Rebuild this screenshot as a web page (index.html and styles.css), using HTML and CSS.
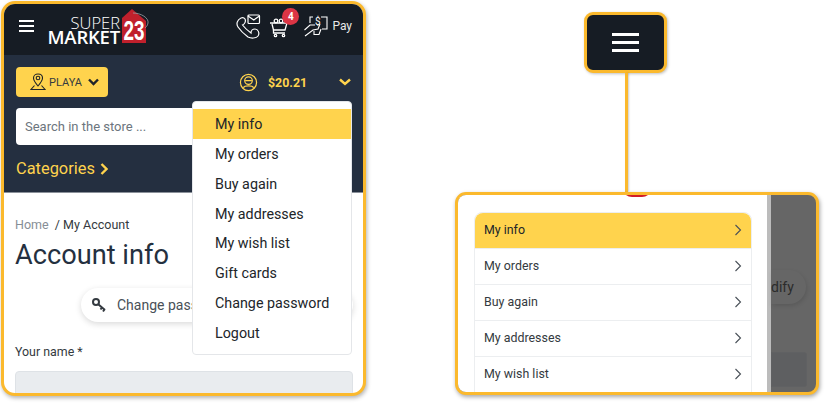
FILE: index.html
```html
<!DOCTYPE html>
<html lang="en">
<head>
  <meta charset="UTF-8">
  <title>Super Market 23 - Account menu</title>
  <link rel="stylesheet" href="styles.css">
</head>
<body>
  <div class="page">

    <!-- Left: phone with the dropdown open -->
    <div class="phone">
      <div class="topbar">
        <div class="burger"><span></span><span></span><span></span></div>
        <div class="logo">
          <div class="logo-words">
            <div class="logo-super">SUPER</div>
            <div class="logo-market">MARKET</div>
          </div>
          <svg class="logo-tag" width="32" height="36" viewBox="0 0 32 36">
            <path d="M1 10 L11 1 L25 13 L25 35 L1 35 Z" fill="#c0202c"/>
            <path d="M12 5 C20 5 28 10 27 15 C26.500 18 25 19 24 20" fill="none" stroke="#9aa0a6" stroke-width="0.800"/>
            <text x="13" y="32" text-anchor="middle" class="logo-num" textLength="21" lengthAdjust="spacingAndGlyphs">23</text>
          </svg>
        </div>
        <div class="top-icons">
          <svg class="icon-call" width="25" height="25" viewBox="0 0 25 25" fill="none" stroke="#fff" stroke-width="1.200">
            <path d="M5 4 C1 6 0 10 2 13 C4 16 8 20 12 23 C15 24.500 20 24.500 22 22 C24 19 22 15 19 15 C16.500 15 15 17 15 19 C11 16 8 13 6.500 11 C9 10 10 7 9 5 C8 3.500 6 3.500 5 4 Z"/>
            <rect x="12" y="1" width="11.500" height="8.500" rx="1"/>
            <path d="M12 2 L17.750 6 L23.500 2"/>
          </svg>
          <div class="cart">
            <svg width="21" height="22" viewBox="0 0 21 22" fill="none" stroke="#fff" stroke-width="1.300">
              <path d="M1 7 H18 L16 14 H4.500 L3 8"/>
              <path d="M4.500 14 V17 H16"/>
              <circle cx="6.500" cy="19.500" r="1.200"/>
              <circle cx="14.500" cy="19.500" r="1.200"/>
              <circle cx="7" cy="5" r="1.800"/>
              <circle cx="12" cy="5" r="1.800"/>
            </svg>
            <span class="badge">4</span>
          </div>
          <svg class="icon-pay" width="24" height="22" viewBox="0 0 24 22" fill="none" stroke="#fff" stroke-width="1.100">
            <path d="M6 8 V2 H9 M17 2 H23 V14 H18"/>
            <path d="M0.500 15 L6 10 L11 10 M1 21 L9 15 L14 14 L16 9 M10 16 V19.500 H15 L17 14"/>
            <text x="11" y="10" class="pay-sign">$</text>
          </svg>
          <span class="pay">Pay</span>
        </div>
      </div>

      <div class="nav">
        <div class="nav-row">
          <button class="place">
            <svg width="16" height="18" viewBox="0 0 16 18" fill="none" stroke="#212529" stroke-width="1.100">
              <path d="M8 13 C5 9.500 3.500 7.500 3.500 5 C3.500 2.500 5.500 1 8 1 C10.500 1 12.500 2.500 12.500 5 C12.500 7.500 11 9.500 8 13 Z"/>
              <circle cx="8" cy="5" r="1.800"/>
              <path d="M4.500 12.500 L1 16.500 H15 L11.500 12.500"/>
            </svg>
            <span>PLAYA</span>
            <svg class="place-arrow" width="11" height="8" viewBox="0 0 11 8" fill="none" stroke="#212529" stroke-width="2.400">
              <path d="M1 1.500 L5.500 6 L10 1.500"/>
            </svg>
          </button>
          <div class="wallet">
            <svg width="19" height="19" viewBox="0 0 20 20" fill="none" stroke="#ffd34d" stroke-width="1.300">
              <circle cx="10" cy="10" r="8.500"/>
              <circle cx="10" cy="8" r="4"/>
              <path d="M6.500 8 H13.500"/>
              <path d="M4.500 15.500 C6 13 14 13 15.500 15.500"/>
            </svg>
            <span class="amount">$20.21</span>
          </div>
          <svg class="wallet-arrow" width="12" height="8" viewBox="0 0 12 8" fill="none" stroke="#ffd34d" stroke-width="2.400">
            <path d="M1 1.500 L6 6 L11 1.500"/>
          </svg>
        </div>
        <div class="search">Search in the store ...</div>
        <div class="categories">
          Categories
          <svg width="8" height="12" viewBox="0 0 8 12" fill="none" stroke="#ffd34d" stroke-width="2.400">
            <path d="M1.500 1 L6.500 6 L1.500 11"/>
          </svg>
        </div>
      </div>

      <div class="content">
        <div class="crumbs"><span class="crumb-home">Home</span> &nbsp;/ My Account</div>
        <h1>Account info</h1>
        <div class="pill-row">
          <div class="pill">
            <svg width="16" height="16" viewBox="0 0 16 16" fill="none" stroke="#343a40" stroke-width="2">
              <circle cx="5" cy="5" r="3"/>
              <path d="M7.500 7.500 L14 13 M11 10.500 L9.500 12.500 M13.500 12.500 L12 14.500"/>
            </svg>
            <span>Change password</span>
          </div>
        </div>
        <div class="field-label">Your name *</div>
        <div class="field"></div>
      </div>

      <ul class="dropdown">
        <li class="active">My info</li>
        <li>My orders</li>
        <li>Buy again</li>
        <li>My addresses</li>
        <li>My wish list</li>
        <li>Gift cards</li>
        <li>Change password</li>
        <li>Logout</li>
      </ul>
    </div>

    <!-- Right: burger callout and the menu it opens -->
    <div class="side">
      <div class="callout">
        <div class="burger big"><span></span><span></span><span></span></div>
      </div>
      <div class="connector"></div>
      <div class="drawer-shot">
        <span class="red-bit"></span>
        <div class="drawer">
          <ul class="menu">
            <li class="active">My info <svg class="chev" width="8" height="12" viewBox="0 0 8 12"><path d="M1.500 1 L6.500 6 L1.500 11"/></svg></li>
            <li>My orders <svg class="chev" width="8" height="12" viewBox="0 0 8 12"><path d="M1.500 1 L6.500 6 L1.500 11"/></svg></li>
            <li>Buy again <svg class="chev" width="8" height="12" viewBox="0 0 8 12"><path d="M1.500 1 L6.500 6 L1.500 11"/></svg></li>
            <li>My addresses <svg class="chev" width="8" height="12" viewBox="0 0 8 12"><path d="M1.500 1 L6.500 6 L1.500 11"/></svg></li>
            <li>My wish list <svg class="chev" width="8" height="12" viewBox="0 0 8 12"><path d="M1.500 1 L6.500 6 L1.500 11"/></svg></li>
          </ul>
        </div>
        <div class="shade">
          <div class="shade-pill">dify</div>
          <div class="shade-field"></div>
        </div>
      </div>
    </div>

  </div>
</body>
</html>
```

FILE: styles.css
```css
* {
  box-sizing: border-box;
}

body {
  margin: 0;
  background: #fff;
  font-family: Roboto, "Liberation Sans", sans-serif;
  color: #212529;
}

ul {
  margin: 0;
  padding: 0;
  list-style: none;
}

.page {
  display: flex;
  align-items: flex-start;
  width: 827px;
  height: 403px;
  padding: 1px 0 0 1px;
  overflow: hidden;
}

/* Left phone */

.phone {
  position: relative;
  flex: none;
  width: 365px;
  height: 395px;
  border: 3px solid #fbb92d;
  border-radius: 14px;
  background: #fff;
  box-shadow: 1px 2px 4px rgba(0, 0, 0, 0.3);
  overflow: hidden;
}

.topbar {
  display: flex;
  align-items: center;
  height: 51px;
  padding: 0 11px 7px 15px;
  background: #161c24;
}

.burger {
  display: flex;
  flex-direction: column;
  gap: 3px;
  width: 15px;
}

.burger span {
  height: 2px;
  background: #fff;
}

.logo {
  display: flex;
  align-items: flex-end;
  margin-left: 12px;
  height: 36px;
}

.logo-words {
  width: 74px;
  text-align: right;
  color: #fff;
  font-family: "Open Sans", sans-serif;
  line-height: 14px;
}

.logo-super {
  font-size: 16.500px;
  font-weight: 300;
}

.logo-market {
  margin-left: -4px;
  font-size: 18.500px;
  font-weight: 600;
  letter-spacing: -0.200px;
}

.logo-tag {
  margin-left: 1px;
  overflow: visible;
}

.logo-num {
  font-family: "Liberation Sans", sans-serif;
  font-size: 28px;
  font-weight: 700;
  fill: #fff;
}

.top-icons {
  display: flex;
  align-items: center;
  margin-left: auto;
}

.icon-call {
  margin-right: 8px;
}

.cart {
  position: relative;
  width: 21px;
  height: 22px;
  margin-top: 2px;
  margin-right: 14px;
}

.badge {
  position: absolute;
  top: -8px;
  left: 13px;
  width: 17px;
  height: 17px;
  border-radius: 50%;
  background: #dc3545;
  color: #fff;
  font-size: 10px;
  font-weight: 700;
  line-height: 17px;
  text-align: center;
}

.icon-pay {
  margin-right: 4px;
}

.pay-sign {
  font-family: Roboto, sans-serif;
  font-size: 10px;
  fill: #fff;
  stroke: none;
}

.pay {
  color: #e8e8e8;
  font-size: 12px;
}

.nav {
  height: 138px;
  padding: 12px 12px 0;
  background: #242f40;
  border-bottom: 1px solid #8b919a;
}

.nav-row {
  display: flex;
  align-items: center;
}

.place {
  display: flex;
  align-items: center;
  width: 92px;
  height: 30px;
  padding: 0 0 0 14px;
  border: none;
  border-radius: 4px;
  background: #ffd34d;
  color: #343a40;
  font-family: inherit;
  font-size: 11px;
}

.place span {
  margin-left: 3px;
}

.place-arrow {
  margin-left: 6px;
}

.wallet {
  display: flex;
  align-items: center;
  gap: 10px;
  margin-left: 131px;
}

.amount {
  color: #ffd34d;
  font-size: 12.400px;
  font-weight: 700;
}

.wallet-arrow {
  margin-left: auto;
}

.search {
  height: 37px;
  margin-top: 11px;
  padding-left: 9px;
  border-radius: 4px;
  background: #fff;
  color: #6c757d;
  font-size: 13px;
  line-height: 37px;
}

.categories {
  display: flex;
  align-items: center;
  gap: 5px;
  margin-top: 11px;
  color: #ffd34d;
  font-size: 16.400px;
  line-height: 26px;
}

.content {
  padding: 24px 10px 0 11px;
}

.crumbs {
  color: #343a40;
  font-size: 12.500px;
  line-height: 16px;
}

.crumb-home {
  color: #868e96;
}

h1 {
  margin: 4px 0 0;
  color: #243040;
  font-size: 27.200px;
  font-weight: 400;
  line-height: 36px;
}

.pill-row {
  display: flex;
  justify-content: flex-end;
  margin-top: 15px;
}

.pill {
  display: flex;
  align-items: center;
  gap: 10px;
  width: 272px;
  height: 34px;
  padding-left: 10px;
  border-radius: 17px;
  background: #fff;
  box-shadow: 0 2px 6px rgba(0, 0, 0, 0.15);
  color: #495057;
  font-size: 14px;
}

.field-label {
  margin-top: 21px;
  color: #343a40;
  font-size: 12.400px;
  line-height: 18px;
}

.field {
  height: 40px;
  margin-top: 10px;
  border: 1px solid #dee2e6;
  border-radius: 4px;
  background: #e9ecef;
}

.dropdown {
  position: absolute;
  top: 97px;
  left: 188px;
  width: 160px;
  height: 254px;
  padding-top: 7px;
  border: 1px solid #e4e6e9;
  border-radius: 4px;
  background: #fff;
}

.dropdown li {
  height: 29.850px;
  padding-left: 22px;
  font-size: 14.300px;
  line-height: 30px;
}

.dropdown li.active {
  background: #ffd34d;
}

/* Right column */

.side {
  display: flex;
  flex-direction: column;
  flex: none;
  width: 364px;
  margin-left: 89px;
  margin-top: 11px;
}

.callout {
  display: flex;
  align-items: center;
  justify-content: center;
  width: 83px;
  height: 61px;
  margin-left: 129px;
  border: 3px solid #fbb92d;
  border-radius: 9px;
  background: #161c24;
  box-shadow: 1px 1px 3px rgba(0, 0, 0, 0.25);
}

.burger.big {
  gap: 5px;
  width: 27px;
}

.burger.big span {
  height: 3px;
}

.connector {
  width: 3px;
  height: 119px;
  margin-left: 170px;
  background: #fbb92d;
  box-shadow: 1px 0 2px rgba(0, 0, 0, 0.2);
}

.drawer-shot {
  position: relative;
  display: flex;
  width: 364px;
  height: 203px;
  border: 3px solid #fbb92d;
  border-radius: 11px;
  background: #666;
  box-shadow: 1px 2px 4px rgba(0, 0, 0, 0.35);
  overflow: hidden;
}

.red-bit {
  position: absolute;
  top: -8px;
  left: 164px;
  width: 30px;
  height: 10px;
  border-radius: 0 0 10px 10px;
  background: #d01c28;
}

.drawer {
  flex: none;
  width: 313px;
  padding: 17px 0 0 16px;
  background: #fff;
  border-right: 4px solid #bcbcbc;
}

.menu {
  width: 278px;
  border: 1px solid #eceef0;
  border-radius: 8px 8px 0 0;
}

.menu li {
  display: flex;
  align-items: center;
  justify-content: space-between;
  height: 36px;
  padding: 0 9px 2px 9px;
  border-bottom: 1px solid #eceef0;
  color: #343a40;
  font-size: 12.400px;
}

.menu li.active {
  border-radius: 8px 8px 0 0;
  background: #ffd34d;
  color: #212529;
}

.chev {
  fill: none;
  stroke: #495057;
  stroke-width: 1.100;
}

.shade {
  flex: 1;
  padding-top: 75px;
}

.shade-pill {
  width: 35px;
  height: 34px;
  border-radius: 0 17px 17px 0;
  box-shadow: 1px 2px 4px rgba(0, 0, 0, 0.12);
  color: #2b2b2b;
  font-size: 14px;
  line-height: 34px;
}

.shade-field {
  width: 36px;
  height: 35px;
  margin-top: 48px;
  border: 1px solid #606163;
  border-radius: 0 3px 3px 0;
  background: #5e5f61;
}
```
